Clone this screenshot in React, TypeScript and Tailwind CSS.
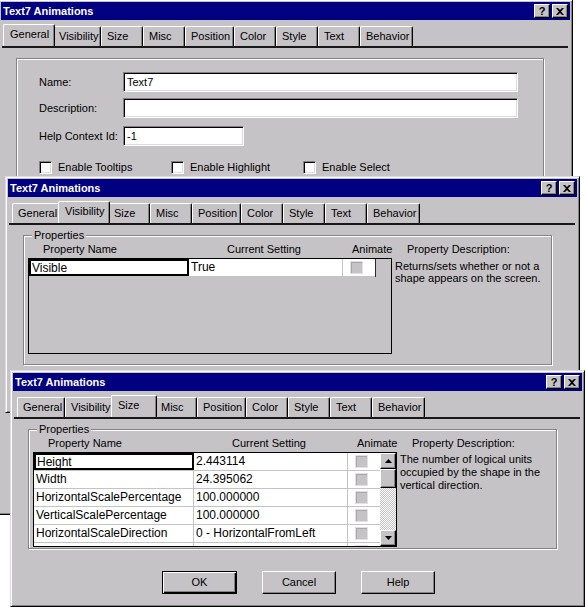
import React from 'react';

const tabs = [
  { label: 'General', w: 'w-[48px]', ws: 'w-[52px]' },
  { label: 'Visibility', w: 'w-[48px]', ws: 'w-[52px]' },
  { label: 'Size', w: 'w-[42px]', ws: 'w-[46px]' },
  { label: 'Misc', w: 'w-[42px]', ws: 'w-[46px]' },
  { label: 'Position', w: 'w-[49px]', ws: 'w-[53px]' },
  { label: 'Color', w: 'w-[42px]', ws: 'w-[46px]' },
  { label: 'Style', w: 'w-[42px]', ws: 'w-[46px]' },
  { label: 'Text', w: 'w-[42px]', ws: 'w-[46px]' },
  { label: 'Behavior', w: 'w-[53px]', ws: 'w-[57px]' },
];

const sizeRows = [
  ['Height', '2.443114'],
  ['Width', '24.395062'],
  ['HorizontalScalePercentage', '100.000000'],
  ['VerticalScalePercentage', '100.000000'],
  ['HorizontalScaleDirection', '0 - HorizontalFromLeft'],
  ['', ''],
];

const raised =
  'border border-t-white border-l-white border-r-black border-b-black shadow-[inset_-1px_-1px_#848284]';

function TitleBar() {
  return (
    <div className="h-[18px] bg-[#000080] flex items-center pl-[2px] pr-[2px]">
      <span className="flex-1 text-white font-bold text-[11px]">Text7 Animations</span>
      <div className={`w-[16px] h-[14px] bg-[#c6c3c6] ${raised} flex items-center justify-center text-[11px] font-bold leading-none`}>
        ?
      </div>
      <div className={`ml-[2px] w-[16px] h-[14px] bg-[#c6c3c6] ${raised} flex items-center justify-center`}>
        <svg width="8" height="7" viewBox="0 0 8 7">
          <path d="M0 0h2l2 2 2-2h2L5 3.5 8 7H6L4 5 2 7H0l3-3.5z" fill="black" />
        </svg>
      </div>
    </div>
  );
}

function Tabs({ active }: { active: string }) {
  return (
    <div className="mt-[4px] h-[22px] flex items-end pl-[4px]">
      {tabs.map((t) =>
        t.label === active ? (
          <div
            key={t.label}
            className={`${t.ws} -mx-[2px] relative z-10 h-[22px] pl-[6px] pt-[2px] border-l border-t border-white border-r border-r-black rounded-t-[2px] shadow-[inset_-1px_0_#848284] bg-[#c6c3c6] leading-[14px]`}
          >
            {t.label}
          </div>
        ) : (
          <div
            key={t.label}
            className={`${t.w} h-[20px] pl-[5px] pt-[2px] border-l border-t border-white border-r border-r-black rounded-t-[2px] shadow-[inset_-1px_0_#848284] leading-[14px]`}
          >
            {t.label}
          </div>
        )
      )}
    </div>
  );
}

function Window({ pos, active, children }: { pos: string; active: string; children: React.ReactNode }) {
  return (
    <div
      className={`absolute ${pos} w-[575px] h-[237px] bg-[#c6c3c6] border border-t-[#dedbde] border-l-[#dedbde] border-r-black border-b-black shadow-[inset_1px_1px_#fff,inset_-1px_-1px_#848284] p-[2px] overflow-hidden`}
    >
      <TitleBar />
      <Tabs active={active} />
      <div className="ml-[1px] mr-[2px] border-t-2 border-[#181818] pt-[10px] pl-[14px]">{children}</div>
    </div>
  );
}

function Input({ w, value }: { w: string; value?: string }) {
  return (
    <div
      className={`${w} h-[20px] bg-white border border-t-[#848284] border-l-[#848284] border-r-white border-b-white shadow-[inset_1px_1px_#000,inset_-1px_-1px_#dedbde] pl-[3px] text-[11px] leading-[18px]`}
    >
      {value}
    </div>
  );
}

function Check({ label }: { label: string }) {
  return (
    <div className="w-[132px] flex items-center gap-[6px]">
      <div className="w-[13px] h-[13px] bg-white border border-t-[#848284] border-l-[#848284] border-r-white border-b-white shadow-[inset_1px_1px_#000,inset_-1px_-1px_#dedbde]" />
      <span>{label}</span>
    </div>
  );
}

function AnimBox() {
  return (
    <div className="w-[13px] h-[13px] bg-[#c6c3c6] border border-[#e2e0e2] shadow-[inset_1px_1px_#a8a6a8]" />
  );
}

function Row({ name, value, focus }: { name: string; value: string; focus?: boolean }) {
  return (
    <div className="h-[18px] shrink-0 flex bg-white border-b border-[#c6c3c6] text-[12px]">
      {focus ? (
        <div className="w-[160px] border-2 border-black pl-[1px] leading-[14px]">{name}</div>
      ) : (
        <div className="w-[160px] border-r border-[#c6c3c6] pl-[2px] leading-[17px]">{name}</div>
      )}
      <div className="w-[154px] border-r border-[#c6c3c6] pl-[2px] leading-[17px]">{value}</div>
      <div className="w-[32px] flex items-center pl-[7px]">
        <AnimBox />
      </div>
    </div>
  );
}

function Arrow({ up }: { up?: boolean }) {
  return (
    <div className={`h-[16px] shrink-0 bg-[#c6c3c6] ${raised} flex items-center justify-center`}>
      <svg width="7" height="4" viewBox="0 0 7 4">
        <path d={up ? 'M3.5 0L7 4H0z' : 'M0 0h7L3.5 4z'} fill="black" />
      </svg>
    </div>
  );
}

function Group({ h, children }: { h: string; children: React.ReactNode }) {
  return (
    <div
      className={`relative w-[529px] ${h} border border-[#848284] shadow-[inset_1px_1px_#fff,1px_1px_#fff] pt-[7px] pl-[4px]`}
    >
      <span className="absolute -top-[7px] left-[8px] px-[2px] bg-[#c6c3c6] leading-[13px]">Properties</span>
      <div className="flex h-[13px] leading-[13px]">
        <span className="ml-[15px] w-[184px]">Property Name</span>
        <span className="w-[125px]">Current Setting</span>
        <span className="w-[55px]">Animate</span>
        <span>Property Description:</span>
      </div>
      {children}
    </div>
  );
}

export default function App() {
  return (
    <div className="relative w-[586px] h-[607px] overflow-hidden bg-white font-['Liberation_Sans',Arial,sans-serif] text-[11px] text-black">
      {/* General */}
      <div className="absolute -left-[2px] -top-[1px] w-[575px] h-[516px] bg-[#c6c3c6] border border-t-[#dedbde] border-l-[#dedbde] border-r-black border-b-black shadow-[inset_1px_1px_#fff,inset_-1px_-1px_#848284] p-[2px]">
        <TitleBar />
        <Tabs active="General" />
        <div className="ml-[1px] mr-[2px] border-t-2 border-[#181818] pt-[10px] pl-[14px]">
          <div className="w-[528px] h-[200px] border border-[#848284] shadow-[inset_1px_1px_#fff,1px_1px_#fff] pl-[22px] pt-[13px]">
            <div className="flex items-center h-[20px]">
              <span className="w-[84px]">Name:</span>
              <Input w="w-[395px]" value="Text7" />
            </div>
            <div className="flex items-center h-[20px] mt-[6px]">
              <span className="w-[84px]">Description:</span>
              <Input w="w-[395px]" />
            </div>
            <div className="flex items-center h-[20px] mt-[8px]">
              <span className="w-[84px]">Help Context Id:</span>
              <Input w="w-[121px]" value="-1" />
            </div>
            <div className="flex mt-[13px]">
              <Check label="Enable Tooltips" />
              <Check label="Enable Highlight" />
              <Check label="Enable Select" />
            </div>
          </div>
        </div>
      </div>

      {/* Visibility */}
      <Window pos="left-[5px] top-[176px]" active="Visibility">
        <Group h="h-[130px]">
          <div className="flex mt-[2px]">
            <div className="w-[364px] h-[96px] border border-black bg-[#c6c3c6] overflow-hidden">
              <div className="w-[347px] border-r border-[#2a2a2a]">
                <Row name="Visible" value="True" focus />
              </div>
            </div>
            <p className="ml-[3px] mt-[2px] leading-[12px]">
              Returns/sets whether or not a<br />
              shape appears on the screen.
            </p>
          </div>
        </Group>
      </Window>

      {/* Size */}
      <Window pos="left-[10px] top-[370px]" active="Size">
        <Group h="h-[120px]">
          <div className="flex mt-[2px]">
            <div className="w-[364px] h-[95px] border border-black bg-white overflow-hidden flex">
              <div className="w-[346px] flex flex-col">
                {sizeRows.map((r, i) => (
                  <Row key={i} name={r[0]} value={r[1]} focus={i === 0} />
                ))}
              </div>
              <div className="w-[16px] flex flex-col">
                <Arrow up />
                <div className={`h-[19px] shrink-0 bg-[#c6c3c6] ${raised}`} />
                <div className="flex-1 bg-[repeating-conic-gradient(#c6c3c6_0%_25%,#ffffff_0%_50%)] bg-[length:2px_2px]" />
                <Arrow />
              </div>
            </div>
            <p className="ml-[3px] mt-[1px] leading-[13px]">
              The number of logical units<br />
              occupied by the shape in the<br />
              vertical direction.
            </p>
          </div>
        </Group>
        <div className="flex gap-[25px] pl-[134px] mt-[22px]">
          <button className={`w-[75px] h-[23px] bg-[#c6c3c6] border border-black shadow-[inset_1px_1px_#fff,inset_-1px_-1px_#000,inset_-2px_-2px_#848284] text-[11px]`}>
            OK
          </button>
          <button className={`w-[74px] h-[23px] bg-[#c6c3c6] ${raised} text-[11px]`}>Cancel</button>
          <button className={`w-[74px] h-[23px] bg-[#c6c3c6] ${raised} text-[11px]`}>Help</button>
        </div>
      </Window>
    </div>
  );
}
